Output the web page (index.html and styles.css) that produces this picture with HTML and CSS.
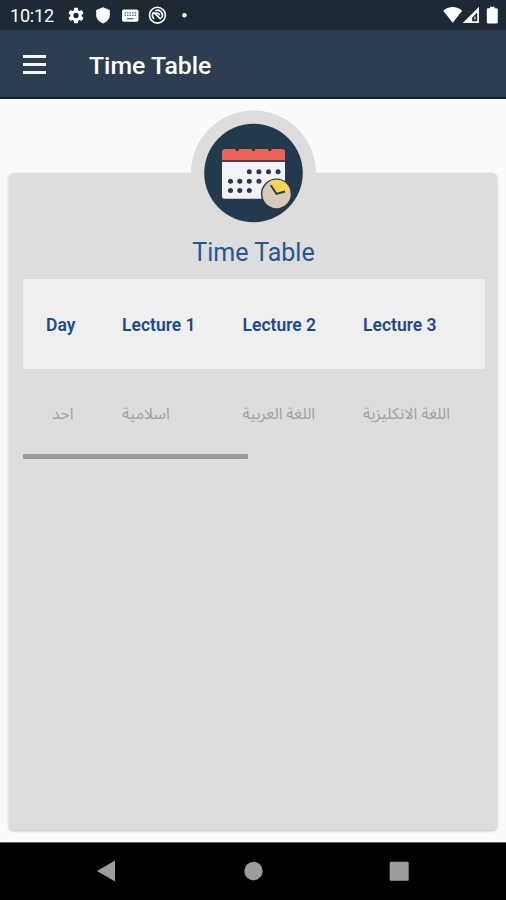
FILE: index.html
```html
<!DOCTYPE html>
<html lang="en">
<head>
<meta charset="utf-8">
<title>Time Table</title>
<link rel="stylesheet" href="styles.css">
</head>
<body>
<header class="status">
  <span class="clock">10:12</span>
  <svg class="notices" width="124" height="30" viewBox="66 0 124 30" fill="#fff">
    <g transform="translate(66.4 5.9) scale(.8)"><path d="M19.14 12.94c.04-.3.06-.61.06-.94s-.02-.64-.07-.94l2.03-1.58c.18-.14.23-.41.12-.61l-1.92-3.32c-.12-.22-.37-.29-.59-.22l-2.39.96c-.5-.38-1.03-.7-1.62-.94L14.4 2.81c-.04-.24-.24-.41-.48-.41h-3.84c-.24 0-.43.17-.47.41l-.36 2.54c-.59.24-1.13.57-1.62.94l-2.39-.96c-.22-.08-.47 0-.59.22L2.74 8.87c-.12.21-.08.47.12.61l2.03 1.58c-.05.3-.09.63-.09.94s.02.64.07.94l-2.03 1.58c-.18.14-.23.41-.12.61l1.92 3.32c.12.22.37.29.59.22l2.39-.96c.5.38 1.03.7 1.62.94l.36 2.54c.05.24.24.41.48.41h3.84c.24 0 .44-.17.47-.41l.36-2.54c.59-.24 1.13-.56 1.62-.94l2.39.96c.22.08.47 0 .59-.22l1.92-3.32c.12-.22.07-.47-.12-.61zM12 15.3a3.3 3.3 0 1 1 0-6.6 3.3 3.3 0 0 1 0 6.600z"/></g>
    <path d="M103 7.300l6.800 2.600v5.200c0 3.900-2.600 6.800-6.800 8.400-4.200-1.600-6.800-4.500-6.800-8.400V9.900z"/>
    <rect x="122" y="9.400" width="16.500" height="12.400" rx="1.800"/>
    <path d="M124.500 12.800h11.500M124.500 15.400h11.500" stroke="#59636b" stroke-width="1.300" stroke-dasharray="1.500 1"/>
    <path d="M127 18.700h6.500" stroke="#59636b" stroke-width="1.300"/>
    <circle cx="157.400" cy="15.200" r="7.900" fill="none" stroke="#fff" stroke-width="1.600"/>
    <path d="M154 18.800a4.800 4.800 0 0 1-.6-6.200M155.300 10.900a4.800 4.800 0 0 1 6 7.200M153.400 12.200l7.400 7M155.200 13.800c1.500-1.500 4-.6 4.300 1.500" fill="none" stroke="#fff" stroke-width="1.700"/>
    <circle cx="184.500" cy="15.300" r="2.200"/>
  </svg>
  <svg class="signals" width="58" height="30" viewBox="442 0 58 30" fill="#fff">
    <path d="M443.200 10.700c5.600-5 13.400-5 19 0L452.700 22.700z"/>
    <path fill-rule="evenodd" d="M479 6.800v16.300h-16.300zM477.200 12.500l-5 5v3.700h5z"/>
    <path d="M474 16.500h2v3h-2z" fill="#9aa2a9"/>
    <path d="M490 6.700h4.500v1.600h2q1.300 0 1.300 1.300v12.700q0 1.300-1.300 1.300h-8.400q-1.300 0-1.300-1.300V9.600q0-1.300 1.300-1.300h1.900z"/>
  </svg>
</header>
<div class="appbar">
  <div class="menu"><i></i><i></i><i></i></div>
  <h1>Time Table</h1>
</div>
<main class="page">
  <section class="card">
    <svg class="badge" width="126" height="126" viewBox="-63 -63 126 126">
      <circle r="62.500" fill="#ddd"/>
      <circle r="49.300" fill="#25394c"/>
      <path d="M-31.500-12h63V23.300q0 2.500-2.500 2.500h-58q-2.500 0-2.500-2.500z" fill="#f2f3f8"/>
      <path d="M-31.500-12.500v-8.500q0-3 3-3h57q3 0 3 3v8.500z" fill="#ec6259"/>
      <path d="M-31.500-13h63v1.900h-63z" fill="#533e4d"/>
      <g fill="#25394c">
        <circle cx="-16.300" cy="-23.500" r="1.700"/><circle cx="0" cy="-23.500" r="1.700"/><circle cx="16.300" cy="-23.500" r="1.700"/>
        <circle cx="-4.200" cy="-1.200" r="2.500"/><circle cx="5.400" cy="-1.200" r="2.500"/><circle cx="15" cy="-1.200" r="2.500"/><circle cx="24.600" cy="-1.200" r="2.500"/>
        <circle cx="-23" cy="8.200" r="2.500"/><circle cx="-13.700" cy="8.200" r="2.500"/><circle cx="-4.200" cy="8.200" r="2.500"/><circle cx="5.400" cy="8.200" r="2.500"/>
        <circle cx="-23" cy="17.600" r="2.500"/><circle cx="-13.700" cy="17.600" r="2.500"/><circle cx="-4.200" cy="17.600" r="2.500"/>
      </g>
      <circle cx="23" cy="21" r="15.600" fill="#25394c"/>
      <circle cx="23" cy="21" r="14.200" fill="#d8c9bb"/>
      <path d="M23 21L16.200 8.500A14.200 14.200 0 0 1 36.600 17z" fill="#ffd150"/>
      <path d="M17.300 12.200L23 21l8.500-2.500" fill="none" stroke="#25394c" stroke-width="1.900"/>
    </svg>
    <h2>Time Table</h2>
    <div class="table">
      <div class="row head"><span>Day</span><span>Lecture 1</span><span>Lecture 2</span><span>Lecture 3</span></div>
      <div class="row" lang="ar"><span class="day"><bdi>احد</bdi></span><span><bdi>اسلامية</bdi></span><span><bdi>اللغة العربية</bdi></span><span><bdi>اللغة الانكليزية</bdi></span></div>
    </div>
    <div class="scrollbar"></div>
  </section>
</main>
<footer class="nav">
  <svg width="506" height="58" viewBox="0 842 506 58" fill="#9c9c9c">
    <path d="M97 871l18-10.500v21z"/>
    <circle cx="253.500" cy="871" r="9.200"/>
    <rect x="389.700" y="861.700" width="19" height="19" rx="1"/>
  </svg>
</footer>
</body>
</html>
```
FILE: styles.css
```css
* { box-sizing: border-box; }
body {
  margin: 0;
  height: 900px;
  display: flex;
  flex-direction: column;
  overflow: hidden;
  background: #fafafa;
  font-family: Roboto, "Noto Sans Arabic", "DejaVu Sans", sans-serif;
}
svg { display: block; flex: none; }
.status {
  height: 30px;
  display: flex;
  align-items: center;
  padding: 0 6px 0 10px;
  background: #1d2935;
  color: #fff;
}
.clock { width: 56px; padding-top: 2px; font-size: 18px; line-height: 24px; letter-spacing: -.2px; }
.signals { margin-left: auto; }
.appbar {
  height: 69px;
  display: flex;
  align-items: center;
  padding: 0 23px;
  background: #2d3d50;
  border-bottom: 2px solid #111b2b;
}
.menu { width: 23px; display: grid; gap: 5px; margin-top: 2px; }
.menu i { height: 3px; background: #f2f5fb; }
h1 { margin: 4px 0 0 43px; font-size: 24.800px; line-height: 30px; font-weight: 500; color: #fff; white-space: nowrap; }
.page { flex: 1; padding: 74px 9px 11px; }
.card {
  display: flow-root;
  height: 657px;
  padding: 0 13px;
  border-radius: 5px;
  background: #ddd;
  box-shadow: 0 1px 3px rgba(0, 0, 0, .25);
}
.badge { margin: -63px auto 0; transform: translateX(.5px); }
h2 { margin: 0; height: 43px; padding-top: 1px; text-align: center; font-size: 25px; line-height: 32px; font-weight: 400; color: #28568f; text-indent: 1px; }
.table { width: 462px; margin-left: .5px; }
.row { height: 87px; display: grid; grid-template-columns: 76px 120.500px 120.500px 1fr; align-items: center; padding: 2px 0 0 23.500px; font-size: 15.900px; color: #a0a0a0; white-space: nowrap; }
.head { height: 90px; background: #efefef; color: #1c4b88; font-size: 17.500px; font-weight: 600; }
.day { padding-left: 6px; }
.scrollbar { width: 225px; height: 5px; margin: -2.500px 0 0 .5px; border-radius: 1px; background: #9a9a9a; }
.nav { height: 58px; background: #000; border-top: 1px solid #666; }
.nav svg { margin-top: -1px; }
```
